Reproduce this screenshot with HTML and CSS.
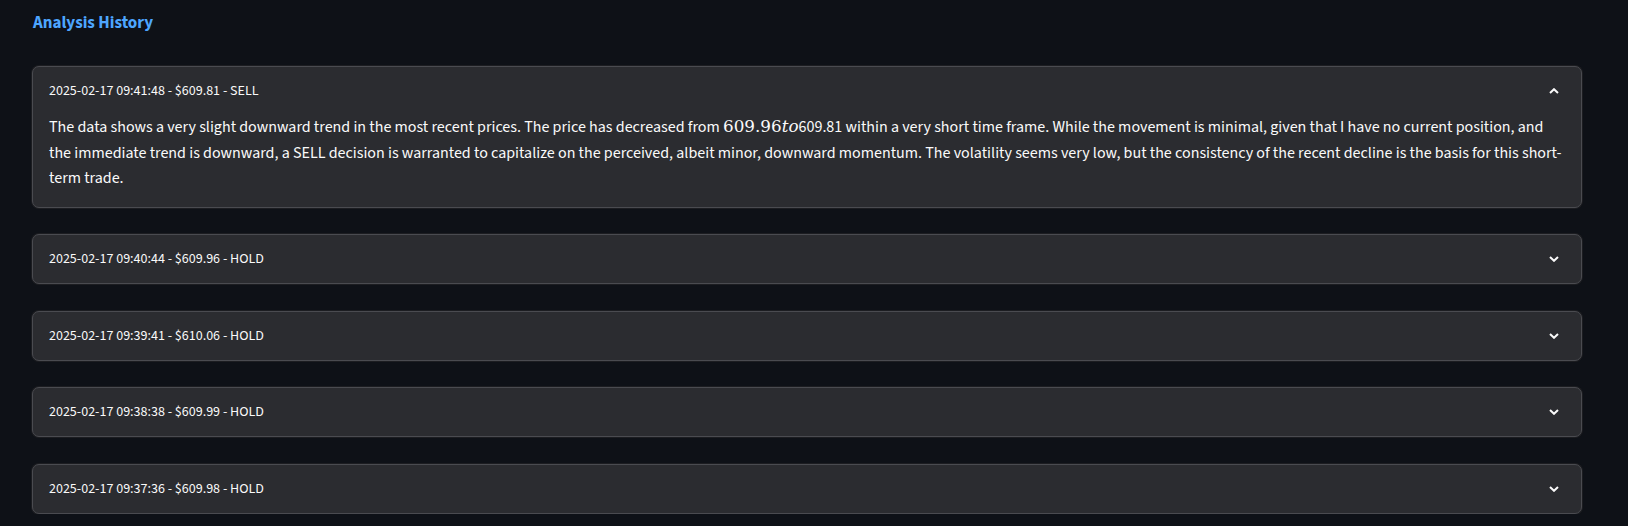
FILE: index.html
```html
<!DOCTYPE html>
<html lang="en">
<head>
<meta charset="utf-8">
<title>Analysis History</title>
<link rel="stylesheet" href="styles.css">
</head>
<body>
<main class="page">
  <h2 class="title">Analysis History</h2>
  <div class="list">
    <details class="exp" open>
      <summary class="exp-head"><span>2025-02-17 09:41:48 - $609.81 - SELL</span><svg class="chev" viewBox="0 0 10 6" width="10" height="6"><path d="M1 5 L5 1.2 L9 5" fill="none" stroke="#fafafa" stroke-width="2"/></svg></summary>
      <div class="exp-body">
        <p>The data shows a very slight downward trend in the most recent prices. The price has decreased from <span class="math">609.96<i>to</i></span>609.81 within a very short time frame. While the movement is minimal, given that I have no current position, and the immediate trend is downward, a SELL decision is warranted to capitalize on the perceived, albeit minor, downward momentum. The volatility seems very low, but the consistency of the recent decline is the basis for this short-term trade.</p>
      </div>
    </details>
    <details class="exp">
      <summary class="exp-head"><span>2025-02-17 09:40:44 - $609.96 - HOLD</span><svg class="chev" viewBox="0 0 10 6" width="10" height="6"><path d="M1 5 L5 1.2 L9 5" fill="none" stroke="#fafafa" stroke-width="2"/></svg></summary>
    </details>
    <details class="exp">
      <summary class="exp-head"><span>2025-02-17 09:39:41 - $610.06 - HOLD</span><svg class="chev" viewBox="0 0 10 6" width="10" height="6"><path d="M1 5 L5 1.2 L9 5" fill="none" stroke="#fafafa" stroke-width="2"/></svg></summary>
    </details>
    <details class="exp">
      <summary class="exp-head"><span>2025-02-17 09:38:38 - $609.99 - HOLD</span><svg class="chev" viewBox="0 0 10 6" width="10" height="6"><path d="M1 5 L5 1.2 L9 5" fill="none" stroke="#fafafa" stroke-width="2"/></svg></summary>
    </details>
    <details class="exp">
      <summary class="exp-head"><span>2025-02-17 09:37:36 - $609.98 - HOLD</span><svg class="chev" viewBox="0 0 10 6" width="10" height="6"><path d="M1 5 L5 1.2 L9 5" fill="none" stroke="#fafafa" stroke-width="2"/></svg></summary>
    </details>
  </div>
</main>
</body>
</html>
```

FILE: styles.css
```css
html, body {
  margin: 0;
  padding: 0;
  background: #0e1117;
}
body {
  font-family: "Source Sans Pro", "Source Sans 3", Lato, "Noto Sans", sans-serif;
  color: #fafafa;
}
.page {
  padding: 9px 46px 0 32px;
}
.title {
  margin: 0;
  font-size: 17px;
  line-height: 28px;
  font-weight: 700;
  color: #4da6ff;
  padding-left: 1px;
}
.list {
  margin-top: 29px;
  display: flex;
  flex-direction: column;
  gap: 26.5px;
}
.exp {
  background: #2b2c30;
  border: 1px solid #4a4b50;
  border-radius: 7px;
  box-shadow: 0 0 0 1px #1c1d21;
}
.exp-head {
  list-style: none;
  height: 48px;
  padding: 0 22px 0 16px;
  display: flex;
  align-items: center;
  justify-content: space-between;
  font-size: 14px;
  cursor: pointer;
}
.exp-head::-webkit-details-marker { display: none; }
.chev {
  display: block;
  transform: rotate(180deg);
}
.exp[open] .chev {
  transform: none;
}
.exp-body {
  padding: 0 16px 15px 16px;
}
.exp-body p {
  margin: 0;
  font-size: 16px;
  line-height: 1.6;
}
.math {
  font-family: "DejaVu Serif", "Liberation Serif", serif;
  font-size: 1.05em;
  line-height: 1;
}
.math i {
  font-style: italic;
}
```
